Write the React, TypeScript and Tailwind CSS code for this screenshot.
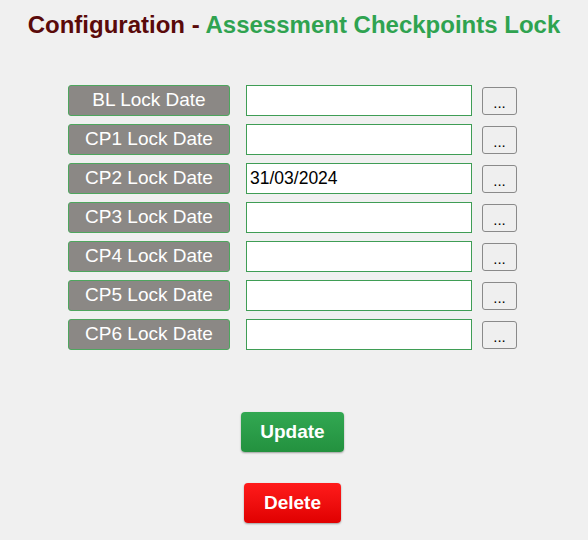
const ROWS = [
  { label: 'BL Lock Date', value: '' },
  { label: 'CP1 Lock Date', value: '' },
  { label: 'CP2 Lock Date', value: '31/03/2024' },
  { label: 'CP3 Lock Date', value: '' },
  { label: 'CP4 Lock Date', value: '' },
  { label: 'CP5 Lock Date', value: '' },
  { label: 'CP6 Lock Date', value: '' },
];

export default function App() {
  return (
    <div className="min-h-[540px] bg-[#f0f0f0] font-['Liberation_Sans',Arial,sans-serif]">
      <h1 className="pt-[10px] text-center text-[24px] font-bold leading-[30px]">
        <span className="text-[#5a0a0a]">Configuration - </span>
        <span className="text-[#2fa350]">Assessment Checkpoints Lock</span>
      </h1>

      <div className="ml-[68px] mt-[45px] flex flex-col gap-[8px]">
        {ROWS.map((row) => (
          <div key={row.label} className="flex items-center">
            <div className="flex h-[31px] w-[162px] items-center justify-center rounded-[3px] border border-[#4ea65e] bg-[#8b8885] text-[19px] text-white">
              {row.label}
            </div>
            <input
              readOnly
              value={row.value}
              className="ml-[16px] h-[31px] w-[226px] border border-[#3f9d55] bg-white px-[3px] text-[17.5px] text-black outline-none"
            />
            <button className="ml-[10px] flex h-[28px] w-[35px] items-center justify-center rounded-[3px] border border-[#8a8a8a] bg-[#efefef] pt-[3px] text-[15px] leading-none text-black">
              ...
            </button>
          </div>
        ))}
      </div>

      <div className="mt-[62px] flex flex-col items-center pr-[3px]">
        <button className="h-[40px] w-[103px] rounded-[4px] bg-gradient-to-b from-[#32a852] to-[#23913f] text-[19px] font-bold text-white shadow-[0_1px_2px_rgba(0,0,0,0.35)]">
          Update
        </button>
        <button className="mt-[31px] h-[40px] w-[97px] rounded-[4px] bg-gradient-to-b from-[#ff1a1a] to-[#e00000] text-[19px] font-bold text-white shadow-[0_1px_2px_rgba(0,0,0,0.35)]">
          Delete
        </button>
      </div>
    </div>
  );
}
